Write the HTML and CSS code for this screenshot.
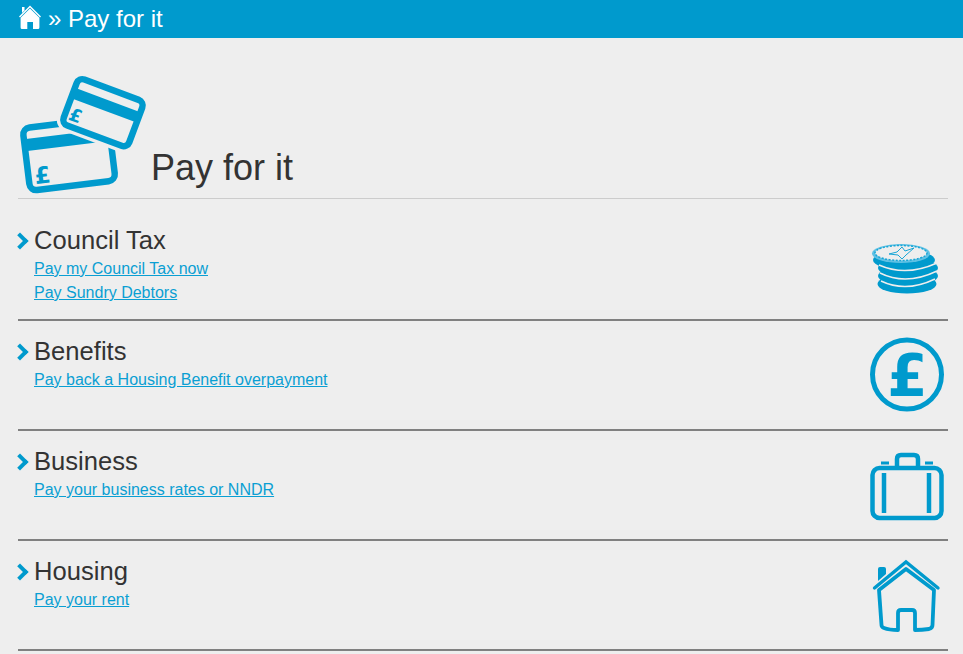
FILE: index.html
```html
<!DOCTYPE html>
<html lang="en">
<head>
    <meta charset="UTF-8">
    <meta name="viewport" content="width=device-width, initial-scale=1.0">
    <title>Pay for it</title>
    <link rel="stylesheet" href="styles.css">
</head>
<body>

    <div class="crumb">
        <a href="#" class="crumb-home">
            <svg width="24" height="26" viewBox="0 0 24 26">
                <path d="M1 12.6 L12 1.5 L23 12.6 L22 13.6 L12 3.6 L2 13.6 Z" fill="#fff"/>
                <path d="M4 3 h2.5 v3.5 L4 9 Z" fill="#fff"/>
                <path d="M12 4.4 L21.4 13.8 V23.5 Q21.4 25 20 25 H15 V18 H9.3 V25 H4 Q2.6 25 2.6 23.5 V13.8 Z" fill="#fff"/>
            </svg>
        </a>
        <span>» Pay for it</span>
    </div>

    <div class="page">
        <div class="title">
            <svg class="title-icon" width="130" height="120" viewBox="0 0 130 120">
                <g transform="rotate(-7 50 80)">
                    <rect x="8" y="49" width="86" height="63" rx="7" fill="none" stroke="#009ACD" stroke-width="6.5"/>
                    <rect x="6" y="60" width="90" height="12" fill="#009ACD"/>
                    <text x="14" y="106" class="card-pound">£</text>
                </g>
                <g transform="rotate(20.5 84.5 38.5)">
                    <rect x="48" y="12" width="73" height="53" rx="8" fill="#eee" stroke="#eee" stroke-width="9"/>
                    <rect x="50" y="14" width="70" height="49" rx="6" fill="none" stroke="#009ACD" stroke-width="6.5"/>
                    <rect x="48" y="25" width="74" height="11" fill="#009ACD"/>
                    <text x="54" y="57" class="card-pound small">£</text>
                </g>
            </svg>
            <h1>Pay for it</h1>
        </div>

        <div class="row first">
            <div class="row-text">
                <h2>Council Tax</h2>
                <a href="#">Pay my Council Tax now</a>
                <a href="#">Pay Sundry Debtors</a>
            </div>
            <svg width="80" height="80" viewBox="0 0 80 80">
                <ellipse cx="39" cy="60" rx="29.5" ry="9.5" fill="#009ACD"/>
                <ellipse cx="40" cy="52" rx="30" ry="9.5" fill="#009ACD"/>
                <ellipse cx="40" cy="44" rx="30" ry="9.5" fill="#009ACD"/>
                <ellipse cx="36" cy="36" rx="31" ry="10" fill="#009ACD"/>
                <path d="M11 41 Q38 53 69 39" fill="none" stroke="#eee" stroke-width="1.4"/>
                <path d="M12 49 Q38 62 69 47" fill="none" stroke="#eee" stroke-width="1.4"/>
                <path d="M13 57 Q38 69 67 55" fill="none" stroke="#eee" stroke-width="1.4"/>
                <ellipse cx="33" cy="29.5" rx="29" ry="9.5" fill="#5fc1e4"/>
                <ellipse cx="33" cy="29" rx="26" ry="7.5" fill="#eee" stroke="#19a6d6" stroke-width="1.5" stroke-dasharray="2 1.5"/>
                <path d="M21 30 L29 28 L34 23 L37 27 L46 24 L38 31 L34 35 L30 31 Z" fill="none" stroke="#19a6d6" stroke-width="1"/>
            </svg>
        </div>

        <div class="row">
            <div class="row-text">
                <h2>Benefits</h2>
                <a href="#">Pay back a Housing Benefit overpayment</a>
            </div>
            <svg width="80" height="80" viewBox="0 0 80 80">
                <circle cx="39" cy="39.5" r="34.5" fill="none" stroke="#009ACD" stroke-width="5"/>
                <text x="39.5" y="61" text-anchor="middle" class="big-pound">£</text>
            </svg>
        </div>

        <div class="row">
            <div class="row-text">
                <h2>Business</h2>
                <a href="#">Pay your business rates or NNDR</a>
            </div>
            <svg width="80" height="80" viewBox="0 0 80 80">
                <rect x="4.5" y="23" width="69" height="50" rx="7" fill="none" stroke="#009ACD" stroke-width="4.5"/>
                <path d="M29 22 V14 Q29 10 33 10 H46 Q50 10 50 14 V22" fill="none" stroke="#009ACD" stroke-width="4.5"/>
                <path d="M13 18 H21 M57 18 H65" stroke="#009ACD" stroke-width="3"/>
                <path d="M16 28 V68 M61 28 V68" stroke="#009ACD" stroke-width="4.5"/>
            </svg>
        </div>

        <div class="row">
            <div class="row-text">
                <h2>Housing</h2>
                <a href="#">Pay your rent</a>
            </div>
            <svg width="80" height="80" viewBox="0 0 80 80">
                <path d="M6.5 33 L38 7 L70 33" fill="none" stroke="#009ACD" stroke-width="3.4" stroke-linecap="round"/>
                <path d="M10 14 Q10 12 12 12 H16 Q18 12 18 14 V19 L10 26 Z" fill="#009ACD"/>
                <path d="M11 35 L38 14 L66 35 L64.5 70 Q64.5 73 61 74 Q54 75 47 75 V58 Q47 55 44 55 H33 Q30 55 30 58 V75 Q21 75 16 73 Q13.5 72 13.5 70 Z" fill="none" stroke="#009ACD" stroke-width="3.8" stroke-linejoin="round"/>
            </svg>
        </div>
    </div>

</body>
</html>
```

FILE: styles.css
```css
body {
    margin: 0;
    font-family: "Liberation Sans", Arial, sans-serif;
    background-color: #eee;
    color: #333;
}
.crumb {
    display: flex;
    align-items: center;
    gap: 6px;
    height: 38px;
    padding-left: 18px;
    background: #009ACD;
    color: #fff;
    font-size: 24px;
}
.crumb-home {
    display: flex;
    margin-top: -4px;
}
.page {
    margin: 0 15px 0 18px;
}
.title {
    display: flex;
    align-items: flex-end;
    height: 161px;
    border-bottom: 1px solid #ccc;
    box-sizing: border-box;
}
.title-icon {
    margin-bottom: 4px;
}
h1 {
    margin: 0 0 9px 3px;
    font-size: 36px;
    font-weight: normal;
    line-height: 42px;
}
.row {
    display: flex;
    justify-content: space-between;
    align-items: flex-start;
    height: 110px;
    padding-top: 14px;
    box-sizing: border-box;
    border-bottom: 2px solid #808080;
}
.row.first {
    height: 122px;
    padding-top: 25px;
}
.row-text {
    padding-left: 16px;
    position: relative;
}
.row-text::before {
    content: "";
    position: absolute;
    left: -4px;
    top: 11px;
    width: 12px;
    height: 12px;
    box-sizing: border-box;
    border-top: 4px solid #009ACD;
    border-right: 4px solid #009ACD;
    transform: rotate(45deg);
}
h2 {
    margin: 0;
    font-size: 25.6px;
    font-weight: normal;
    line-height: 33px;
}
.row-text a {
    display: block;
    font-size: 16px;
    line-height: 24px;
    color: #0A9FD3;
}
.card-pound {
    font-family: "DejaVu Sans", sans-serif;
    font-weight: bold;
    font-size: 23px;
    fill: #009ACD;
}
.card-pound.small {
    font-size: 18px;
}
.big-pound {
    font-family: "DejaVu Sans", sans-serif;
    font-weight: bold;
    font-size: 58px;
    fill: #009ACD;
}
```
